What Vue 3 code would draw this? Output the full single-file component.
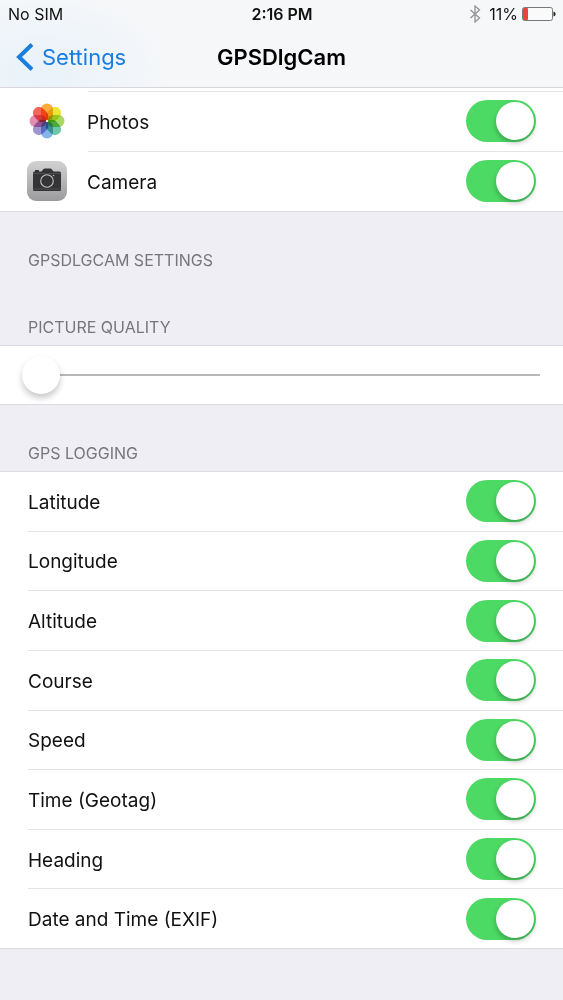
<template>
  <div class="screen">
    <header class="top">
      <div class="status">
        <span>No SIM</span>
        <span class="clock">2:16 PM</span>
        <span class="power">
          <svg class="bluetooth" viewBox="0 0 12 18" aria-hidden="true">
            <path d="M1.5 5 10.5 13 6 17V1L10.5 5 1.5 13" />
          </svg>
          <span>11%</span>
          <svg class="battery" viewBox="0 0 34 14" aria-hidden="true">
            <rect class="battery-case" x="0.5" y="0.5" width="30" height="13" rx="2" />
            <rect class="battery-level" x="1" y="1" width="5" height="12" rx="1" />
            <path class="battery-tip" d="M31.500 4.500c2.800.8 2.800 4.200 0 5z" />
          </svg>
        </span>
      </div>
      <nav class="nav">
        <a class="back" href="#">
          <svg viewBox="0 0 18 28" aria-hidden="true">
            <path d="M16 1.500 3 14l13 12.500" />
          </svg>
          <span>Settings</span>
        </a>
        <h1>GPSDlgCam</h1>
      </nav>
    </header>

    <main>
      <ul class="group access">
        <li v-for="app in apps" :key="app.name">
          <label class="row">
            <svg v-if="app.name === 'Photos'" class="app-icon" viewBox="0 0 40 40" aria-hidden="true">
              <rect
                v-for="(color, i) in petals"
                :key="color"
                class="petal"
                x="14"
                y="2.5"
                width="12"
                height="17"
                rx="6"
                :fill="color"
                :transform="`rotate(${i * 45} 20 20)`"
              />
              <circle cx="20" cy="20" r="1" fill="#fff" />
            </svg>
            <svg v-else class="app-icon" viewBox="0 0 40 40" aria-hidden="true">
              <defs>
                <linearGradient id="camera-bg" x1="0" y1="0" x2="0" y2="1">
                  <stop offset="0" stop-color="#d2d2d3" />
                  <stop offset="1" stop-color="#9b9b9e" />
                </linearGradient>
              </defs>
              <rect width="40" height="40" rx="9" fill="url(#camera-bg)" />
              <path
                d="M6 12q0-1.500 1.500-1.500h.5V9h4v1.500h2.500l2-2.500q.5-.6 1.500-.6h5q1 0 1.500.6l2 2.500h6q1.500 0 1.500 1.500v17q0 1-1 1h-26q-1 0-1-1z"
                fill="#343436"
              />
              <path d="M6 12.500h28M6 28h28" stroke="#66666a" stroke-width=".5" />
              <circle cx="20" cy="20" r="7.500" fill="#343436" />
              <circle cx="20" cy="20" r="6.300" fill="none" stroke="#c6c6c8" stroke-width="1.100" />
              <circle cx="26.500" cy="14.500" r=".8" fill="#b5b5b7" />
            </svg>
            <span class="name">{{ app.name }}</span>
            <input v-model="app.on" class="switch" type="checkbox" role="switch">
          </label>
        </li>
      </ul>

      <h2 class="intro">GPSDLGCAM SETTINGS</h2>

      <h2 id="quality-title">PICTURE QUALITY</h2>
      <div class="group quality">
        <input v-model="quality" type="range" min="0" max="100" aria-labelledby="quality-title">
      </div>

      <h2>GPS LOGGING</h2>
      <ul class="group logging">
        <li v-for="item in logging" :key="item.name">
          <label class="row">
            <span class="name">{{ item.name }}</span>
            <input v-model="item.on" class="switch" type="checkbox" role="switch">
          </label>
        </li>
      </ul>
    </main>
  </div>
</template>

<script setup>
import { ref } from 'vue'

const apps = ref([
  { name: 'Photos', on: true },
  { name: 'Camera', on: true }
])

const quality = ref(0)

const logging = ref([
  { name: 'Latitude', on: true },
  { name: 'Longitude', on: true },
  { name: 'Altitude', on: true },
  { name: 'Course', on: true },
  { name: 'Speed', on: true },
  { name: 'Time (Geotag)', on: true },
  { name: 'Heading', on: true },
  { name: 'Date and Time (EXIF)', on: true }
])

// Clockwise from the top petal
const petals = ['#fbab3c', '#ece636', '#a9d860', '#6cc8a6', '#85b5ea', '#a096d0', '#e48db2', '#f4665a']
</script>

<style>
body {
  margin: 0;
  background: #efeef4;
}
</style>

<style scoped>
.screen {
  min-height: 100vh;
  background: #efeef4;
  color: #111;
  font-family: Inter, "Liberation Sans", sans-serif;
}

.top {
  box-sizing: border-box;
  height: 88px;
  border-bottom: 1px solid #d8d8dc;
  background:
    radial-gradient(ellipse 130px 80px at 40px 70px, rgba(226, 240, 250, 0.7), rgba(226, 240, 250, 0)),
    #f6f7f9;
}

.status {
  display: grid;
  grid-template-columns: 1fr auto 1fr;
  align-items: center;
  height: 28px;
  padding: 0 7px 0 8px;
  font-size: 16px;
  line-height: 20px;
}

.clock {
  font-weight: 600;
}

.power {
  display: flex;
  align-items: center;
  justify-content: flex-end;
}

.bluetooth {
  width: 12px;
  height: 18px;
  margin-right: 8px;
  fill: none;
  stroke: #929498;
  stroke-width: 1.3;
}

.battery {
  width: 34px;
  height: 14px;
  margin-left: 4px;
}

.battery-case {
  fill: #fafafb;
  stroke: #77787a;
}

.battery-level {
  fill: #ea4438;
}

.battery-tip {
  fill: #222;
}

.nav {
  display: grid;
  grid-template-columns: 1fr auto 1fr;
  align-items: center;
  height: 58px;
  padding: 0 16px;
}

.back {
  display: flex;
  align-items: center;
  gap: 8px;
  color: #1a7de0;
  font-size: 22px;
  line-height: 28px;
  text-decoration: none;
}

.back svg {
  width: 18px;
  height: 28px;
  fill: none;
  stroke: currentColor;
  stroke-width: 4;
}

h1 {
  margin: 0;
  color: #000;
  font-size: 22px;
  font-weight: 600;
  line-height: 28px;
}

h2 {
  margin: 0;
  padding: 38px 28px 8px;
  color: #77767c;
  font-size: 16px;
  font-weight: 400;
  line-height: 20px;
}

.intro {
  padding-bottom: 9px;
}

.group {
  margin: 0;
  padding: 0;
  border-bottom: 1px solid #dcdbe0;
  background: #fff;
  list-style: none;
}

.access {
  padding-top: 3px;
}

.row {
  display: flex;
  align-items: center;
  box-sizing: border-box;
  height: 100%;
  margin-left: 28px;
  padding-right: 27px;
  border-top: 1px solid #e4e4e7;
}

.name {
  flex: 1;
  padding-top: 3px;
  font-size: 19px;
  line-height: 24px;
}

.access li {
  display: flex;
  height: 60px;
}

.access .row {
  position: relative;
  flex: 1;
  border-top: 0;
}

.access .row::before {
  position: absolute;
  top: 0;
  right: 0;
  left: 60px;
  height: 1px;
  background: #e4e4e7;
  content: "";
}

.app-icon {
  width: 40px;
  height: 40px;
  margin: 0 20px 0 -1px;
}

.petal {
  mix-blend-mode: multiply;
}

.switch {
  display: flex;
  align-items: center;
  box-sizing: border-box;
  width: 70px;
  height: 42px;
  margin: 0;
  padding: 0 2px;
  border-radius: 21px;
  background: #e5e5ea;
  appearance: none;
}

.switch::before {
  width: 38px;
  height: 38px;
  border-radius: 50%;
  background: #fff;
  box-shadow: 0 3px 5px rgba(0, 0, 0, 0.25);
  content: "";
}

.switch:checked {
  justify-content: flex-end;
  background: #4cd964;
}

.quality {
  display: flex;
  align-items: center;
  box-sizing: border-box;
  height: 60px;
  padding: 0 23px 0 22px;
  border-top: 1px solid #dcdbe0;
}

.quality input {
  width: 100%;
  height: 38px;
  margin: 0;
  background: linear-gradient(#b8b8ba, #b8b8ba) center / 100% 2px no-repeat;
  appearance: none;
}

.quality input::-webkit-slider-thumb {
  width: 38px;
  height: 38px;
  border-radius: 50%;
  background: #fff;
  box-shadow: 0 4px 6px rgba(0, 0, 0, 0.22);
  appearance: none;
}

.logging {
  display: grid;
  grid-auto-rows: 1fr;
  min-height: 477px;
}

.logging li:first-child .row {
  margin-left: 0;
  padding-left: 28px;
  border-top-color: #dcdbe0;
}
</style>
